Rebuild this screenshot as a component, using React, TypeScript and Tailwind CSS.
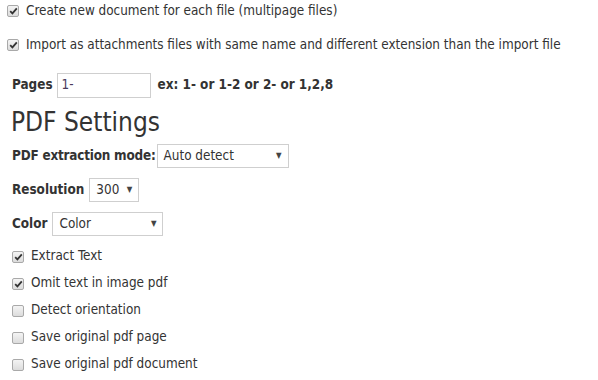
import React from "react";

const font = { fontFamily: '"DejaVu Sans Condensed", "DejaVu Sans", Tahoma, sans-serif' };

function Box({ checked }: { checked: boolean }) {
  return (
    <span className="inline-flex h-[12px] w-[12px] shrink-0 items-center justify-center rounded-[2px] border border-[#a9a9a9] bg-gradient-to-b from-[#f4f4f4] to-[#dcdcdc]">
      {checked && (
        <svg width="9" height="8" viewBox="0 0 9 8">
          <path d="M1.2 4.2 L3.4 6.4 L7.8 1.4" fill="none" stroke="#333" strokeWidth="1.8" />
        </svg>
      )}
    </span>
  );
}

function Select({ value, width }: { value: string; width: string }) {
  return (
    <div className={`flex h-[24px] items-center justify-between border border-[#cfcfcf] bg-white pl-[6px] pr-[6px] text-[13.4px] text-[#333] ${width}`}>
      <span>{value}</span>
      <span className="text-[8px] text-[#444]">▼</span>
    </div>
  );
}

export default function App() {
  return (
    <div className="h-[380px] w-[598px] overflow-hidden bg-white text-[13.4px] text-[#333]" style={font}>
      <div className="flex h-[22px] items-center gap-[7px] pl-[7px]">
        <Box checked />
        <span>Create new document for each file (multipage files)</span>
      </div>
      <div className="mt-[12px] flex h-[22px] items-center gap-[7px] pl-[7px]">
        <Box checked />
        <span>Import as attachments files with same name and different extension than the import file</span>
      </div>
      <div className="mt-[17px] flex items-center pl-[12px]">
        <span className="font-bold">Pages</span>
        <div className="ml-[4px] flex h-[25px] w-[94px] items-center border border-[#cfcfcf] pl-[4px] text-[#4a3b5c]">1-</div>
        <span className="ml-[7px] font-bold">ex: 1- or 1-2 or 2- or 1,2,8</span>
      </div>
      <div className="mt-[9px] pl-[11px] text-[26px] leading-[30px]">PDF Settings</div>
      <div className="mt-[7px] flex items-center pl-[12px]">
        <span className="font-bold tracking-[-0.2px]">PDF extraction mode:</span>
        <div className="ml-[1px]">
          <Select value="Auto detect" width="w-[132px]" />
        </div>
      </div>
      <div className="mt-[10px] flex items-center pl-[12px]">
        <span className="font-bold">Resolution</span>
        <div className="ml-[5px]">
          <Select value="300" width="w-[50px]" />
        </div>
      </div>
      <div className="mt-[10px] flex items-center pl-[12px]">
        <span className="font-bold">Color</span>
        <div className="ml-[5px]">
          <Select value="Color" width="w-[111px]" />
        </div>
      </div>
      <div className="mt-[7px] flex flex-col pl-[12px]">
        {[
          ["Extract Text", true],
          ["Omit text in image pdf", true],
          ["Detect orientation", false],
          ["Save original pdf page", false],
          ["Save original pdf document", false],
        ].map(([label, c]) => (
          <div key={label as string} className="flex h-[27px] items-center gap-[7px]">
            <Box checked={c as boolean} />
            <span>{label as string}</span>
          </div>
        ))}
      </div>
    </div>
  );
}
